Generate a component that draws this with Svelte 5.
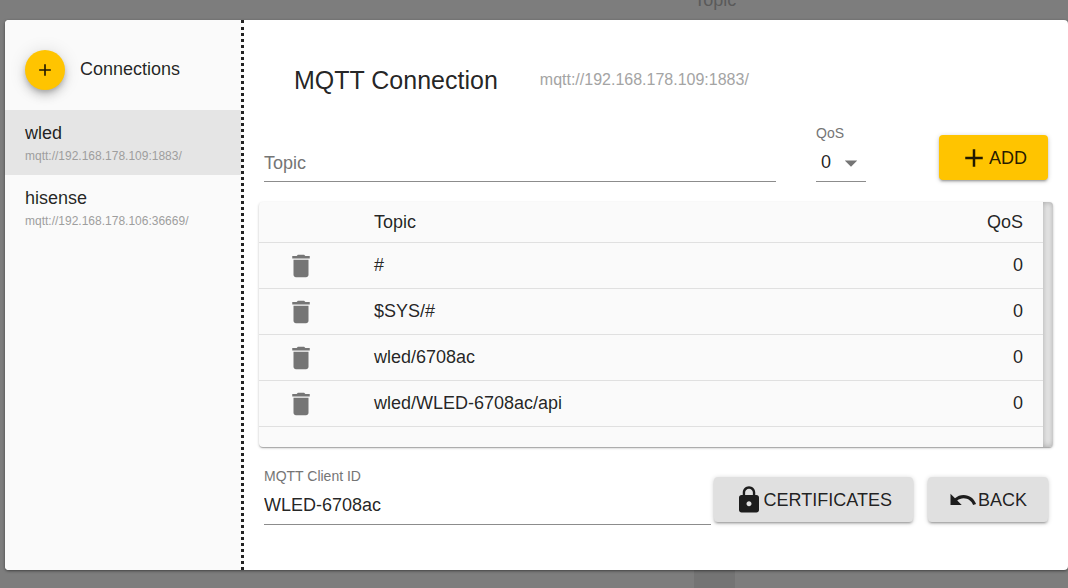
<script lang="ts">
  type Subscription = { topic: string; qos: number };
  type Connection = { name: string; url: string };

  const connections: Connection[] = [
    { name: "wled", url: "mqtt://192.168.178.109:1883/" },
    { name: "hisense", url: "mqtt://192.168.178.106:36669/" },
  ];

  let selected = $state(0);
  let topic = $state("");
  let qos = $state(0);
  let clientId = $state("WLED-6708ac");
  let subscriptions = $state<Subscription[]>([
    { topic: "#", qos: 0 },
    { topic: "$SYS/#", qos: 0 },
    { topic: "wled/6708ac", qos: 0 },
    { topic: "wled/WLED-6708ac/api", qos: 0 },
  ]);

  const icons = {
    add: "M19 13h-6v6h-2v-6H5v-2h6V5h2v6h6v2z",
    trash:
      "M6 19c0 1.1.9 2 2 2h8c1.1 0 2-.9 2-2V7H6v12zM19 4h-3.5l-1-1h-5l-1 1H5v2h14V4z",
    lock: "M18 8h-1V6c0-2.76-2.24-5-5-5S7 3.24 7 6v2H6c-1.1 0-2 .9-2 2v10c0 1.1.9 2 2 2h12c1.1 0 2-.9 2-2V10c0-1.1-.9-2-2-2zm-6 9c-1.1 0-2-.9-2-2s.9-2 2-2 2 .9 2 2-.9 2-2 2zm3.1-9H8.9V6c0-1.71 1.39-3.1 3.1-3.1 1.71 0 3.1 1.39 3.1 3.1v2z",
    undo: "M12.5 8c-2.65 0-5.05.99-6.9 2.6L2 7v9h9l-3.62-3.62c1.39-1.16 3.16-1.88 5.12-1.88 3.54 0 6.55 2.31 7.6 5.5l2.37-.78C21.08 11.03 17.15 8 12.5 8z",
    dropDown: "M7 10l5 5 5-5z",
  };

  function addTopic() {
    if (!topic) return;
    subscriptions.push({ topic, qos });
    topic = "";
  }

  function removeTopic(index: number) {
    subscriptions.splice(index, 1);
  }
</script>

{#snippet icon(path: string)}
  <svg class="icon" viewBox="0 0 24 24" aria-hidden="true">
    <path d={path} />
  </svg>
{/snippet}

<div class="page">
  <div class="backdrop" aria-hidden="true">
    <span class="backdrop-label">Topic</span>
    <span class="backdrop-block"></span>
  </div>

  <div class="dialog" role="dialog" aria-labelledby="dialog-title">
    <aside class="sidebar">
      <div class="sidebar-header">
        <button class="fab" aria-label="Add connection">
          {@render icon(icons.add)}
        </button>
        <span>Connections</span>
      </div>
      {#each connections as connection, i}
        <button
          class="connection"
          class:selected={selected === i}
          onclick={() => (selected = i)}
        >
          <span>{connection.name}</span>
          <span class="connection-url">{connection.url}</span>
        </button>
      {/each}
    </aside>

    <main class="content">
      <header class="title">
        <h1 id="dialog-title">MQTT Connection</h1>
        <span class="title-url">{connections[selected].url}</span>
      </header>

      <div class="topic-row">
        <div class="field floating" class:filled={topic !== ""}>
          <label for="topic">Topic</label>
          <input id="topic" type="text" bind:value={topic} />
        </div>
        <div class="field qos">
          <label for="qos">QoS</label>
          <select id="qos" bind:value={qos}>
            <option value={0}>0</option>
            <option value={1}>1</option>
            <option value={2}>2</option>
          </select>
          {@render icon(icons.dropDown)}
        </div>
        <button class="button primary" onclick={addTopic}>
          {@render icon(icons.add)}ADD
        </button>
      </div>

      <div class="paper">
        <div class="table-wrap">
          <table>
            <thead>
              <tr>
                <th class="action"></th>
                <th>Topic</th>
                <th class="number">QoS</th>
              </tr>
            </thead>
            <tbody>
              {#each subscriptions as subscription, i}
                <tr>
                  <td class="action">
                    <button
                      class="icon-button"
                      aria-label="Delete {subscription.topic}"
                      onclick={() => removeTopic(i)}
                    >
                      {@render icon(icons.trash)}
                    </button>
                  </td>
                  <td>{subscription.topic}</td>
                  <td class="number">{subscription.qos}</td>
                </tr>
              {/each}
            </tbody>
          </table>
        </div>
        <div class="scroll-track"></div>
      </div>

      <div class="client-row">
        <div class="field">
          <label for="client-id">MQTT Client ID</label>
          <input id="client-id" type="text" bind:value={clientId} />
        </div>
        <div class="actions">
          <button class="button">{@render icon(icons.lock)}CERTIFICATES</button>
          <button class="button">{@render icon(icons.undo)}BACK</button>
        </div>
      </div>
    </main>
  </div>
</div>

<style>
  :global(body) {
    background: #7d7d7d;
  }

  .page {
    position: relative;
    box-sizing: border-box;
    min-height: 100vh;
    padding: 20px 0 18px 5px;
    color: rgba(0, 0, 0, 0.87);
    font: 18px/24px "Liberation Sans", Arial, sans-serif;
  }

  button,
  input,
  select {
    box-sizing: border-box;
    margin: 0;
    padding: 0;
    border: none;
    border-radius: 0;
    background: none;
    color: inherit;
    font: inherit;
  }

  button {
    cursor: pointer;
  }

  input,
  select {
    outline: none;
  }

  .icon {
    flex: none;
    width: 30px;
    height: 30px;
    fill: currentColor;
  }

  /* the dimmed view behind the dialog */
  .backdrop {
    position: absolute;
    inset: 0;
    display: flex;
    flex-direction: column;
    justify-content: space-between;
    padding-left: 65%;
    overflow: hidden;
    line-height: 0;
  }

  .backdrop-label {
    color: #5a5a5a;
  }

  .backdrop-block {
    width: 41px;
    height: 24px;
    background: #747474;
  }

  .dialog {
    position: relative;
    display: flex;
    border-radius: 4px;
    overflow: hidden;
    background: #fff;
    box-shadow: 0 1px 3px rgba(0, 0, 0, 0.5);
  }

  .sidebar {
    flex: none;
    width: 236px;
    border-right: 3px dotted #222;
    background: #fafafa;
  }

  .sidebar-header {
    display: flex;
    align-items: flex-start;
    gap: 15px;
    padding: 30px 20px 20px;
    line-height: 38px;
  }

  .fab {
    display: grid;
    place-items: center;
    width: 40px;
    height: 40px;
    border-radius: 50%;
    background: #ffc400;
    box-shadow:
      0 3px 5px -1px rgba(0, 0, 0, 0.2),
      0 6px 10px 0 rgba(0, 0, 0, 0.14),
      0 1px 18px 0 rgba(0, 0, 0, 0.12);

    & :global(.icon) {
      width: 20px;
      height: 20px;
    }
  }

  .connection {
    display: flex;
    flex-direction: column;
    justify-content: center;
    width: 100%;
    height: 65px;
    padding: 3px 20px 0;
    text-align: left;

    &.selected {
      background: #e5e5e5;
    }
  }

  .connection-url {
    color: #9e9e9e;
    font-size: 12px;
    line-height: 22px;
  }

  .content {
    flex: 1;
    min-width: 0;
    padding: 45px 20px;
  }

  .title {
    display: flex;
    align-items: center;
    gap: 42px;
    margin: 0 30px 28px;
    line-height: 30px;

    & h1 {
      margin: 0;
      font-size: 25px;
      font-weight: 400;
    }
  }

  .title-url {
    color: #a4a4a4;
    font-size: 16px;
  }

  .topic-row {
    display: grid;
    grid-template-columns: 1fr 50px 142px;
    align-items: end;
    column-gap: 40px;
  }

  .topic-row .button {
    justify-self: end;
  }

  .field {
    display: grid;
    grid-template-rows: 20px 39px;
    flex: 1;
    min-width: 0;

    & label {
      color: #757575;
      font-size: 14px;
      line-height: 20px;
    }

    & input,
    & select {
      grid-area: 2 / 1;
      width: 100%;
      border-bottom: 1px solid #8c8c8c;
    }
  }

  .floating:not(.filled, :focus-within) label {
    grid-area: 2 / 1;
    align-self: center;
    font-size: 18px;
  }

  .qos {
    & select {
      appearance: none;
      padding-left: 5px;
    }

    & :global(.icon) {
      grid-area: 2 / 1;
      place-self: center end;
      color: #757575;
      pointer-events: none;
    }
  }

  .button {
    display: flex;
    align-items: center;
    height: 45px;
    margin-bottom: 2px;
    padding: 0 21px 0 20px;
    border-radius: 4px;
    background: #e0e0e0;
    box-shadow:
      0 1px 5px 0 rgba(0, 0, 0, 0.2),
      0 2px 2px 0 rgba(0, 0, 0, 0.14),
      0 3px 1px -2px rgba(0, 0, 0, 0.12);

    &.primary {
      background: #ffc400;
    }
  }

  .paper {
    display: flex;
    margin: 20px -5px 19px;
    border-radius: 4px;
    overflow: hidden;
    background: #fafafa;
    box-shadow:
      0 1px 3px 0 rgba(0, 0, 0, 0.2),
      0 1px 1px 0 rgba(0, 0, 0, 0.14),
      0 2px 1px -1px rgba(0, 0, 0, 0.12);
  }

  .table-wrap {
    flex: 1;
    padding-bottom: 20px;
  }

  .scroll-track {
    width: 10px;
    background: #e8e8e8;
    box-shadow: inset 0 0 6px rgba(0, 0, 0, 0.3);
  }

  table {
    width: 100%;
    border-collapse: separate;
    border-spacing: 0;
    table-layout: fixed;
  }

  th,
  td {
    box-sizing: border-box;
    padding: 0 20px 0 0;
    border-bottom: 1px solid #e0e0e0;
    font-weight: 400;
    text-align: left;
  }

  th {
    height: 41px;
  }

  td {
    height: 46px;
    padding-bottom: 2px;
  }

  .action {
    width: 115px;
    padding: 0 0 0 27px;
  }

  .number {
    width: 100px;
    text-align: right;
  }

  .icon-button {
    display: block;
    color: #757575;

    & :global(.icon) {
      display: block;
    }
  }

  .client-row {
    display: flex;
    align-items: end;
    gap: 3px;
  }

  .actions {
    display: flex;
    gap: 15px;
    padding-bottom: 1px;
  }
</style>
